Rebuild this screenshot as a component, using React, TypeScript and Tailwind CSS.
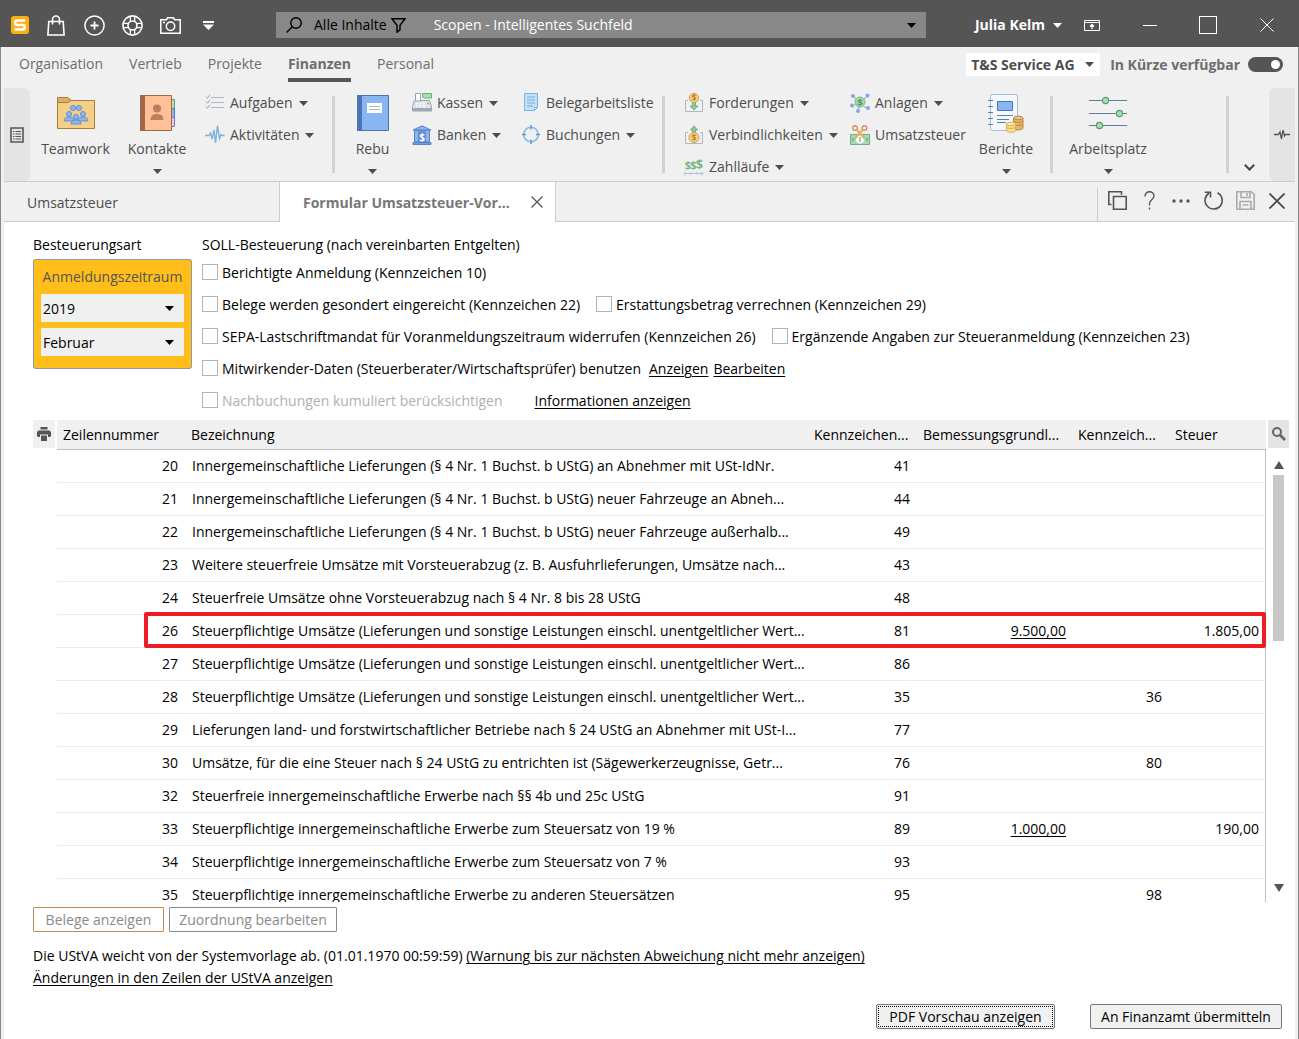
import React, { FC, ReactNode } from 'react';

interface ChildrenProps {
    children: ReactNode;
}

const Arrow: FC<{ className?: string }> = ({ className = 'text-[#4d4d4d]' }) => (
    <svg className={['h-[5px] w-[9px] shrink-0 pointer-events-none', className].join(' ')} viewBox="0 0 9 5">
        <path d="M0 0h9L4.5 5z" fill="currentColor" />
    </svg>
);

/* ---------- title bar icons ---------- */

const LogoIcon = () => (
    <svg className="h-[18px] w-[18px]" viewBox="0 0 18 18">
        <rect width="18" height="18" rx="3" fill="#fbb116" />
        <path
            d="M14 4.5H6.2C4.8 4.5 4 5.2 4 6.6S4.8 9 6.2 9h5.3c1.500 0 2.300.8 2.300 2.200s-.8 2.300-2.300 2.300H3.700"
            fill="none"
            stroke="#fff"
            strokeWidth="2.500"
        />
    </svg>
);

const BagIcon = () => (
    <svg className="h-[21px] w-[18px]" viewBox="0 0 18 21" fill="none" stroke="#fff" strokeWidth="1.600">
        <path d="M1.800 6.500h14.400l.9 13.500H.9z" />
        <path d="M5.500 9.500V4.500a3.500 3.500 0 0 1 7 0v5" />
    </svg>
);

const PlusIcon = () => (
    <svg className="h-[21px] w-[21px]" viewBox="0 0 21 21" fill="none" stroke="#fff" strokeWidth="1.500">
        <circle cx="10.500" cy="10.500" r="9.600" />
        <path d="M10.500 6.500v8M6.500 10.500h8" strokeWidth="1.800" />
    </svg>
);

const HelpRingIcon = () => (
    <svg className="h-[21px] w-[21px]" viewBox="0 0 21 21" fill="none" stroke="#fff" strokeWidth="1.600">
        <circle cx="10.500" cy="10.500" r="9.600" />
        <circle cx="10.500" cy="10.500" r="4.500" />
        <path
            d="M8.300 1.500v4.800M12.700 1.500v4.800M8.300 19.500v-4.800M12.700 19.500v-4.800M1.500 8.300h4.800M1.500 12.700h4.800M19.500 8.300h-4.800M19.500 12.700h-4.800"
            strokeWidth="1.300"
        />
    </svg>
);

const CameraIcon = () => (
    <svg className="h-[17px] w-[21px]" viewBox="0 0 21 17" fill="none" stroke="#fff" strokeWidth="1.500">
        <path d="M.8 2.800h5.700L7.500.8h6l1 2h5.700v13.400H.8z" />
        <circle cx="10.500" cy="9.300" r="4.200" />
        <path d="M3 5.500h2" />
    </svg>
);

const QuickMenuIcon = () => (
    <svg className="h-[9px] w-[11px]" viewBox="0 0 11 9" fill="#fff">
        <path d="M0 0h11v2H0zM0 3.500h11L5.500 9z" />
    </svg>
);

const SearchIcon = () => (
    <svg className="h-4 w-4" viewBox="0 0 16 16" fill="none" stroke="#000" strokeWidth="1.400">
        <circle cx="10" cy="6" r="5.200" />
        <path d="M6.300 9.700.6 15.400" />
    </svg>
);

const FilterIcon = () => (
    <svg className="h-[15px] w-[15px]" viewBox="0 0 15 15" fill="none" stroke="#000" strokeWidth="1.400">
        <path d="M1 .8h13L9 7.200v4.600l-3 2.400v-7z" />
    </svg>
);

const RibbonToggleIcon = () => (
    <svg className="h-[11px] w-4" viewBox="0 0 16 11" fill="none" stroke="#fff">
        <path d="M.5.5h15v10H.5zM.5 2.500h15" />
        <path d="M8 9V5M6 6.500l2-2 2 2" strokeWidth="1.300" />
    </svg>
);

/* ---------- ribbon icons ---------- */

const person = (x: number, y: number) => (
    <g key={`${x}-${y}`}>
        <path d={`M${x - 5} ${y + 7}c0-3 2-4 5-4s5 1 5 4z`} />
        <circle cx={x} cy={y} r="2.600" />
    </g>
);

const TeamworkIcon = () => (
    <svg className="h-[32px] w-[38px]" viewBox="0 0 38 32">
        <path d="M.5 31.500V.5h10l3.500 3h23.500v28z" fill="#f5cf85" stroke="#a5803f" />
        <path d="M.5.5h10L14 3.500l-3 2H.5z" fill="#dcae62" stroke="#a5803f" />
        <g fill="#8ab4f2" stroke="#5b86c9" strokeWidth=".8">
            <circle cx="16" cy="11" r="2.600" />
            <circle cx="22" cy="11" r="2.600" />
            {person(12, 17)}
            {person(26, 17)}
            {person(19, 20)}
        </g>
    </svg>
);

const KontakteIcon = () => (
    <svg className="h-[36px] w-[35px]" viewBox="0 0 35 36">
        <path d="M31 4.500h3.500v9H31z" fill="#b4dfbb" stroke="#5f9f70" />
        <path d="M31 13.500h3.500v9H31z" fill="#8ab4f2" stroke="#4a78bd" />
        <path d="M31 22.500h3.500v9H31z" fill="#dccbec" stroke="#8a6fae" />
        <path d="M.5.5h31v35H.5z" fill="#ffbf97" stroke="#a0674a" />
        <path d="M.5.5h4v35h-4z" fill="#a0674a" stroke="#a0674a" />
        <circle cx="17" cy="13.500" r="4" fill="#b97f60" />
        <path d="M10.500 25c0-4 2.500-6 6.500-6s6.500 2 6.500 6z" fill="#b97f60" />
    </svg>
);

const RebuIcon = () => (
    <svg className="h-[36px] w-[32px]" viewBox="0 0 32 36">
        <path d="M.5.5h31v35H.5z" fill="#89b5f1" stroke="#4a76b8" />
        <path d="M.5.5h4v35h-4z" fill="#4a76b8" stroke="#4a76b8" />
        <path d="M10 8h15v10H10z" fill="#fff" />
        <path d="M12 11.500h11M12 14.500h11" stroke="#a9b6c6" />
    </svg>
);

const BerichteIcon = () => (
    <svg className="h-[39px] w-[36px]" viewBox="0 0 36 39">
        <rect x="2.500" y=".5" width="27" height="36" rx="2" fill="#f2f8fe" stroke="#a3bcd6" />
        <path d="M0 6.500h5M0 12.500h5M0 18.500h5M0 24.500h5M0 30.500h5" stroke="#5f7d9c" />
        <path d="M9.500 7.500h15v9h-15z" fill="#8ab4f2" stroke="#4a76b8" />
        <path d="M9 21.500h16M9 25.500h12M9 28.500h9" stroke="#5f7d9c" />
        <g stroke="#b78941">
            <path d="M25.500 24v10c0 2.500 9.500 2.500 9.500 0V24z" fill="#e5b368" />
            <ellipse cx="30.300" cy="24" rx="4.700" ry="1.800" fill="#eec281" />
            <path d="M25.500 27c0 2 9.500 2 9.500 0M25.500 30c0 2 9.500 2 9.500 0" fill="none" />
        </g>
        <g stroke="#d6b45a">
            <path d="M18.500 30v6.500c0 2.500 9 2.500 9 0V30z" fill="#f7dd8c" />
            <ellipse cx="23" cy="30" rx="4.500" ry="1.800" fill="#fbe8a6" />
            <path d="M18.500 33c0 2 9 2 9 0" fill="none" />
        </g>
    </svg>
);

const ArbeitsplatzIcon = () => (
    <svg className="h-[34px] w-[38px]" viewBox="0 0 38 34">
        <path d="M0 4.500h38M0 17.500h38M0 29.500h38" stroke="#5f7d9c" />
        <g fill="#a8dcb2" stroke="#5a9f72" strokeWidth="1.200">
            <circle cx="16.500" cy="4.500" r="3.100" />
            <circle cx="30.500" cy="17.500" r="3.100" />
            <circle cx="10.500" cy="29.500" r="3.100" />
        </g>
    </svg>
);

const SmallIcon: FC<ChildrenProps> = ({ children }) => (
    <svg className="h-5 w-5 shrink-0" viewBox="0 0 20 20" fill="none">
        {children}
    </svg>
);

const AufgabenIcon = () => (
    <SmallIcon>
        <path d="M6 4.500h13M6 9.500h13M6 14.500h13" stroke="#a9b9c9" />
        <path d="m.8 3.500 1.700 1.700L5 1.800M.8 8.500l1.700 1.700L5 6.800M.8 13.500l1.700 1.700L5 11.800" stroke="#7dbb8d" />
    </SmallIcon>
);

const AktivitaetenIcon = () => (
    <SmallIcon>
        <path d="M0 10.500h4l1.500-2.500L7 14l2-9 1.500 13L12.500.5l2 13 1.500-4 1 1h2.500" stroke="#7fb0df" strokeWidth="1.400" />
    </SmallIcon>
);

const KassenIcon = () => (
    <SmallIcon>
        <path d="M2.500 7.500h15l2 6v4.500h-19v-4.500z" fill="#dfe3e8" stroke="#9aa5b1" />
        <path d="M1 15h18v3H1z" fill="#9dabb9" />
        <path d="M10.500.5h9V5h-7l-2-1z" fill="#a9ddb2" stroke="#6dad7e" />
        <path d="M3.500.5h5v7.500h-5z" fill="#fff" stroke="#9aa5b1" />
        <path d="M4 10.500h2M7.500 10.500h2M11 10.500h2M4 13h2M7.500 13h2M11 13h2" stroke="#fff" strokeWidth="1.500" />
        <path d="M15 10.500h2" stroke="#ea8a80" strokeWidth="1.500" />
    </SmallIcon>
);

const BankenIcon = () => (
    <SmallIcon>
        <path d="M1 5 10 .8 19 5z" fill="#8ab4f2" stroke="#5b86c9" />
        <path d="M2.500 5.500h15V17h-15z" fill="#8ab4f2" stroke="#5b86c9" />
        <path d="M1 17.500h18v2H1z" fill="#6d99da" stroke="#5b86c9" />
        <path d="M6 6.500h8V17H6z" fill="#5f8cd0" />
        <text x="10" y="15.500" fontSize="10" fontWeight="700" textAnchor="middle" fill="#fff">$</text>
    </SmallIcon>
);

const BelegIcon = () => (
    <SmallIcon>
        <path d="M3.500.5h13v14l-3 3h-10z" fill="#bfe1fb" stroke="#7fb3dd" />
        <path d="M16.500 14.500 13.500 17.500v-3z" fill="#fff" stroke="#7fb3dd" />
        <path d="M6 4h8M6 7h8M6 10h8M6 13h6" stroke="#7fa9d6" />
    </SmallIcon>
);

const BuchungenIcon = () => (
    <SmallIcon>
        <circle cx="10" cy="9.500" r="7.300" stroke="#8bbbe3" strokeWidth="1.600" />
        <path d="M10 0v4.500M10 14.500V19M1 9.500h4M15 9.500h4" stroke="#6c93bd" strokeWidth="1.400" />
    </SmallIcon>
);

const ForderungenIcon = () => (
    <SmallIcon>
        <path d="M4 7.500H1.500v11h17v-11H16" stroke="#a9b9c9" />
        <path d="M8.500 9h3v4h2.500l-4 4-4-4h2.500z" fill="#8fcb9d" stroke="#63a577" strokeWidth=".8" />
        <circle cx="10" cy="5" r="4.600" fill="#f7cf85" stroke="#d39f4a" />
        <text x="10" y="8" fontSize="8" fontWeight="700" textAnchor="middle" fill="#b57f2d">$</text>
    </SmallIcon>
);

const VerbindlichkeitenIcon = () => (
    <SmallIcon>
        <path d="M4 7.500H1.500v11h17v-11H16" stroke="#a9b9c9" />
        <path d="M8.500 9V5H6.500L10 .8 13.500 5h-2v4z" fill="#8fcb9d" stroke="#63a577" strokeWidth=".8" />
        <circle cx="10" cy="12.500" r="5" fill="#f7cf85" stroke="#d39f4a" />
        <text x="10" y="15.500" fontSize="8" fontWeight="700" textAnchor="middle" fill="#b57f2d">$</text>
    </SmallIcon>
);

const ZahllaeufeIcon = () => (
    <SmallIcon>
        <g fontSize="11" fontWeight="700" textAnchor="middle" fill="#79b68a">
            <text x="4" y="12">$</text>
            <text x="9.500" y="12">$</text>
            <text x="15.500" y="12" fontSize="13">$</text>
        </g>
        <path d="M0 16.500h19M1 14.500v4M7 15v3M13 15v3M17 14.500l2 2-2 2" stroke="#b3c3dc" />
    </SmallIcon>
);

const AnlagenIcon = () => (
    <SmallIcon>
        <path d="m3 3 14 13M18 3 3 13M10 10 8 18" stroke="#8d9fb3" />
        <circle cx="10" cy="9" r="5" fill="#9fd7ab" stroke="#7dbb8d" />
        <text x="10" y="12.500" fontSize="9" fontWeight="700" textAnchor="middle" fill="#4f9166">$</text>
        <g fill="#7ba9ec">
            <circle cx="3" cy="3" r="2" />
            <circle cx="17.500" cy="2.500" r="2" />
            <circle cx="2" cy="12.500" r="2" />
            <circle cx="18" cy="15" r="2" />
            <circle cx="8" cy="18" r="2" />
        </g>
    </SmallIcon>
);

const UmsatzsteuerIcon = () => (
    <SmallIcon>
        <path d="M.5 9.500h19v10H.5z" fill="#a5dab0" stroke="#6fb080" />
        <circle cx="10" cy="14.500" r="4" fill="#fff" />
        <path d="M3 13v3M17 13v3M10 12v5" stroke="#4f9166" />
        <circle cx="5" cy="3" r="2.300" stroke="#dd8b6a" strokeWidth="1.500" />
        <circle cx="14.500" cy="3" r="2.300" stroke="#dd8b6a" strokeWidth="1.500" />
        <path d="m6.500 4.500 8 9M13 4.500l-8 9" stroke="#e2ae62" strokeWidth="2" />
    </SmallIcon>
);

/* ---------- ribbon building blocks ---------- */

interface RibbonItem {
    icon: ReactNode;
    label: string;
    menu?: boolean;
}

const LargeButton: FC<RibbonItem & { className: string }> = ({ icon, label, menu, className }) => (
    <button className={['flex shrink-0 flex-col items-center pt-[6px] text-[#4d4d4d]', className].join(' ')}>
        <span className="flex h-10 items-center justify-center">{icon}</span>
        <span className="h-8 leading-8">{label}</span>
        {menu && (
            <span className="flex h-3 items-center">
                <Arrow />
            </span>
        )}
    </button>
);

const SmallColumn: FC<{ items: RibbonItem[]; className: string }> = ({ items, className }) => (
    <div className={['shrink-0', className].join(' ')}>
        {items.map((i) => (
            <button key={i.label} className="flex h-8 items-center text-[#4d4d4d]">
                {i.icon}
                <span className="ml-[5px] mr-[6px] whitespace-nowrap">{i.label}</span>
                {i.menu && <Arrow />}
            </button>
        ))}
    </div>
);

const Divider = () => <div className="mt-[9px] h-[77px] w-[3px] shrink-0 bg-[#d2d2d2]" />;

const Check: FC<{ label: string; disabled?: boolean }> = ({ label, disabled }) => (
    <label className={['flex items-center gap-1', disabled ? 'text-[#b0b0b0]' : ''].join(' ')}>
        <input
            type="checkbox"
            disabled={disabled}
            className="mb-[2px] h-4 w-4 shrink-0 appearance-none border border-[#b4b4b4] bg-white checked:bg-[#555]"
        />
        {label}
    </label>
);

const PeriodSelect: FC<{ label: string; options: string[]; value: string }> = ({ label, options, value }) => (
    <div className="relative">
        <select
            aria-label={label}
            defaultValue={value}
            className="block h-7 w-full appearance-none bg-[#f0f0f0] pl-[2px] pt-[2px] text-black"
        >
            {options.map((o) => (
                <option key={o}>{o}</option>
            ))}
        </select>
        <Arrow className="absolute right-[10px] top-[12px] text-black" />
    </div>
);

const mainTabs = ['Organisation', 'Vertrieb', 'Projekte', 'Finanzen', 'Personal'];

interface Row {
    line: number;
    text: string;
    kz: string;
    base?: string;
    kzTax?: string;
    tax?: string;
    marked?: boolean;
}

const rows: Row[] = [
    { line: 20, text: 'Innergemeinschaftliche Lieferungen (§ 4 Nr. 1 Buchst. b UStG) an Abnehmer mit USt-IdNr.', kz: '41' },
    { line: 21, text: 'Innergemeinschaftliche Lieferungen (§ 4 Nr. 1 Buchst. b UStG) neuer Fahrzeuge an Abneh...', kz: '44' },
    { line: 22, text: 'Innergemeinschaftliche Lieferungen (§ 4 Nr. 1 Buchst. b UStG) neuer Fahrzeuge außerhalb...', kz: '49' },
    { line: 23, text: 'Weitere steuerfreie Umsätze mit Vorsteuerabzug (z. B. Ausfuhrlieferungen, Umsätze nach...', kz: '43' },
    { line: 24, text: 'Steuerfreie Umsätze ohne Vorsteuerabzug nach § 4 Nr. 8 bis 28 UStG', kz: '48' },
    {
        line: 26,
        text: 'Steuerpflichtige Umsätze (Lieferungen und sonstige Leistungen einschl. unentgeltlicher Wert...',
        kz: '81',
        base: '9.500,00',
        tax: '1.805,00',
        marked: true,
    },
    { line: 27, text: 'Steuerpflichtige Umsätze (Lieferungen und sonstige Leistungen einschl. unentgeltlicher Wert...', kz: '86' },
    {
        line: 28,
        text: 'Steuerpflichtige Umsätze (Lieferungen und sonstige Leistungen einschl. unentgeltlicher Wert...',
        kz: '35',
        kzTax: '36',
    },
    { line: 29, text: 'Lieferungen land- und forstwirtschaftlicher Betriebe nach § 24 UStG an Abnehmer mit USt-I...', kz: '77' },
    {
        line: 30,
        text: 'Umsätze, für die eine Steuer nach § 24 UStG zu entrichten ist (Sägewerkerzeugnisse, Getr...',
        kz: '76',
        kzTax: '80',
    },
    { line: 32, text: 'Steuerfreie innergemeinschaftliche Erwerbe nach §§ 4b und 25c UStG', kz: '91' },
    {
        line: 33,
        text: 'Steuerpflichtige innergemeinschaftliche Erwerbe zum Steuersatz von 19 %',
        kz: '89',
        base: '1.000,00',
        tax: '190,00',
    },
    { line: 34, text: 'Steuerpflichtige innergemeinschaftliche Erwerbe zum Steuersatz von 7 %', kz: '93' },
    { line: 35, text: 'Steuerpflichtige innergemeinschaftliche Erwerbe zu anderen Steuersätzen', kz: '95', kzTax: '98' },
];

const TitleBar = () => (
    <header className="flex h-[47px] shrink-0 items-center bg-[#555] pt-[3px] text-white">
        <div className="flex w-[276px] shrink-0 items-center pl-[11px]">
            <LogoIcon />
            <div className="ml-2 flex items-center">
                <button aria-label="Shop" className="flex w-[38px] justify-center"><BagIcon /></button>
                <button aria-label="Neu" className="flex w-[38px] justify-center"><PlusIcon /></button>
                <button aria-label="Hilfe" className="flex w-[38px] justify-center"><HelpRingIcon /></button>
                <button aria-label="Bildschirmfoto" className="flex w-[38px] justify-center"><CameraIcon /></button>
                <button aria-label="Schnellzugriff" className="flex w-[38px] justify-center"><QuickMenuIcon /></button>
            </div>
        </div>
        <div className="flex h-[26px] min-w-0 flex-1 items-center bg-[#888] px-[10px]">
            <SearchIcon />
            <button className="ml-3 flex shrink-0 items-center gap-1 text-black">
                Alle Inhalte
                <FilterIcon />
            </button>
            <input
                aria-label="Suchfeld"
                placeholder="Scopen - Intelligentes Suchfeld"
                className="ml-7 min-w-0 flex-1 bg-transparent placeholder-white outline-none"
            />
            <Arrow className="text-black" />
        </div>
        <div className="flex w-[373px] shrink-0 items-center justify-end pr-[3px]">
            <button className="flex items-center gap-2 font-bold">
                Julia Kelm
                <Arrow className="text-white" />
            </button>
            <button aria-label="Menüband" className="flex w-[60px] justify-center"><RibbonToggleIcon /></button>
            <button aria-label="Minimieren" className="flex w-[56px] justify-center">
                <span className="h-px w-[14px] bg-white" />
            </button>
            <button aria-label="Maximieren" className="flex w-[60px] justify-center">
                <span className="h-[18px] w-[18px] border border-white" />
            </button>
            <button aria-label="Fenster schließen" className="flex w-[58px] justify-center">
                <svg className="h-[14px] w-[14px]" viewBox="0 0 14 14" stroke="#fff">
                    <path d="m.5.5 13 13M13.500.5l-13 13" />
                </svg>
            </button>
        </div>
    </header>
);

const MainNav = () => (
    <div className="flex h-10 shrink-0 items-start">
        <nav className="flex gap-[26px] pl-[15px] text-[#6d6d6d]">
            {mainTabs.map((t) => (
                <a
                    key={t}
                    href="#"
                    className={[
                        'h-[35px] leading-[34px]',
                        t === 'Finanzen' ? 'border-b-4 border-[#555] font-bold' : '',
                    ].join(' ')}
                >
                    {t}
                </a>
            ))}
        </nav>
        <div className="ml-auto flex items-center gap-[10px] pr-3 pt-[6px] font-bold text-[#4d4d4d]">
            <div className="relative w-[134px]">
                <select aria-label="Firma" className="block h-[23px] w-full appearance-none bg-white pl-[5px]">
                    <option>T&amp;S Service AG</option>
                </select>
                <Arrow className="absolute right-[6px] top-[9px] text-[#4d4d4d]" />
            </div>
            <label className="flex items-center gap-2 text-[#6d6d6d]">
                In Kürze verfügbar
                <span className="relative h-[15px] w-[35px]">
                    <input
                        type="checkbox"
                        role="switch"
                        defaultChecked
                        className="block h-full w-full appearance-none rounded-full bg-[#555]"
                    />
                    <span className="pointer-events-none absolute right-[3px] top-[3px] h-[9px] w-[9px] rounded-full bg-white" />
                </span>
            </label>
        </div>
    </div>
);

const Ribbon = () => (
    <div className="flex h-[95px] shrink-0 overflow-hidden border-b border-[#ccc]">
        <button aria-label="Liste" className="mt-px flex w-[26px] shrink-0 items-center justify-center rounded-r-md bg-[#e4e4e4]">
            <svg className="h-4 w-[14px]" viewBox="0 0 14 16" fill="none" stroke="#555">
                <path d="M1 1h12v14H1z" strokeWidth="1.600" />
                <path d="M5.500 4.500H11M5.500 7H11M5.500 9.500H11M5.500 12H11M3 4.500h1.500M3 7h1.500M3 9.500h1.500M3 12h1.500" />
            </svg>
        </button>
        <LargeButton className="w-[91px]" icon={<TeamworkIcon />} label="Teamwork" />
        <LargeButton className="w-[72px]" icon={<KontakteIcon />} label="Kontakte" menu />
        <SmallColumn
            className="w-[139px] pl-3"
            items={[
                { icon: <AufgabenIcon />, label: 'Aufgaben', menu: true },
                { icon: <AktivitaetenIcon />, label: 'Aktivitäten', menu: true },
            ]}
        />
        <Divider />
        <LargeButton className="w-[75px]" icon={<RebuIcon />} label="Rebu" menu />
        <SmallColumn
            className="w-[111px] pl-[2px]"
            items={[
                { icon: <KassenIcon />, label: 'Kassen', menu: true },
                { icon: <BankenIcon />, label: 'Banken', menu: true },
            ]}
        />
        <SmallColumn
            className="w-[141px]"
            items={[
                { icon: <BelegIcon />, label: 'Belegarbeitsliste' },
                { icon: <BuchungenIcon />, label: 'Buchungen', menu: true },
            ]}
        />
        <Divider />
        <SmallColumn
            className="w-[185px] pl-[19px]"
            items={[
                { icon: <ForderungenIcon />, label: 'Forderungen', menu: true },
                { icon: <VerbindlichkeitenIcon />, label: 'Verbindlichkeiten', menu: true },
                { icon: <ZahllaeufeIcon />, label: 'Zahlläufe', menu: true },
            ]}
        />
        <SmallColumn
            className="w-[123px]"
            items={[
                { icon: <AnlagenIcon />, label: 'Anlagen', menu: true },
                { icon: <UmsatzsteuerIcon />, label: 'Umsatzsteuer' },
            ]}
        />
        <LargeButton className="mr-[11px] w-[66px]" icon={<BerichteIcon />} label="Berichte" menu />
        <Divider />
        <LargeButton className="w-[110px]" icon={<ArbeitsplatzIcon />} label="Arbeitsplatz" menu />
        <div className="ml-auto flex">
            <Divider />
            <button aria-label="Mehr" className="flex w-10 items-end justify-center pb-[10px]">
                <svg className="h-[7px] w-[11px]" viewBox="0 0 11 7" fill="none" stroke="#444" strokeWidth="2">
                    <path d="m.8.8 4.700 4.700L10.200.8" />
                </svg>
            </button>
            <button aria-label="Aktivität" className="mt-px flex w-[26px] items-center justify-center rounded-l-md bg-[#e4e4e4]">
                <svg className="h-[11px] w-4" viewBox="0 0 16 11" fill="none" stroke="#555" strokeWidth="1.300">
                    <path d="M0 5.500h4.500L6 3l1.500 7L9 1l1.500 6 1-1.500H16" />
                </svg>
            </button>
        </div>
    </div>
);

const DocumentTabs = () => (
    <div className="flex h-10 shrink-0 text-[#4d4d4d]">
        <button className="w-[275px] border-b border-[#ccc] pl-[23px] pb-[2px] text-left pt-1">Umsatzsteuer</button>
        <div className="flex w-[277px] items-center border-x border-[#ccc] bg-white pl-[23px] pr-3">
            <button className="pt-[2px] font-bold text-[#777]">Formular Umsatzsteuer-Vor...</button>
            <button aria-label="Tab schließen" className="ml-auto">
                <svg className="h-3 w-3" viewBox="0 0 12 12" stroke="#555" strokeWidth="1.300">
                    <path d="m.5.5 11 11M11.500.5l-11 11" />
                </svg>
            </button>
        </div>
        <div className="flex flex-1 justify-end border-b border-[#ccc] pt-[6px]">
            <div className="flex items-center border-l border-[#ccc] pb-2 pl-[3px] pr-[2px]">
                <button aria-label="Duplizieren" className="flex w-8 justify-center">
                    <svg className="h-[19px] w-[19px]" viewBox="0 0 19 19" fill="none" stroke="#555" strokeWidth="1.600">
                        <path d="M5.500 5.500h12.700v12.700H5.500z" />
                        <path d="M3.500 13.500H.8V.8h12.700v3" />
                    </svg>
                </button>
                <button aria-label="Hilfe zum Formular" className="flex w-8 justify-center">
                    <svg className="h-[19px] w-[11px]" viewBox="0 0 11 19" fill="none" stroke="#555" strokeWidth="1.400">
                        <path d="M1 5.500C1 2.500 2.800.8 5.500.8S10 2.500 10 5c0 3.500-4.500 4-4.500 7.500v2M5.500 16.500v2" />
                    </svg>
                </button>
                <button aria-label="Weitere Aktionen" className="flex w-8 justify-center">
                    <svg className="h-[4px] w-[18px]" viewBox="0 0 18 4" fill="#555">
                        <circle cx="2" cy="2" r="1.700" />
                        <circle cx="9" cy="2" r="1.700" />
                        <circle cx="16" cy="2" r="1.700" />
                    </svg>
                </button>
                <button aria-label="Aktualisieren" className="flex w-8 justify-center">
                    <svg className="h-[19px] w-[19px]" viewBox="0 0 19 19" fill="none" stroke="#555" strokeWidth="1.600">
                        <path d="M13.500 1.800A8.600 8.600 0 1 1 5 2.200" />
                        <path d="M.8 1.200h5.700v5.300" />
                    </svg>
                </button>
                <button aria-label="Speichern" disabled className="flex w-8 justify-center">
                    <svg className="h-[19px] w-[19px]" viewBox="0 0 19 19" fill="none" stroke="#aaa" strokeWidth="1.600">
                        <path d="M.8.8h14.700l2.700 2.700v14.700H.8z" />
                        <path d="M5 1v5.500h9V1M4 18v-7.500h11V18M6.500 14h6M11 2v3" />
                    </svg>
                </button>
                <button aria-label="Formular schließen" className="flex w-8 justify-center">
                    <svg className="h-4 w-4" viewBox="0 0 16 16" stroke="#444" strokeWidth="1.700">
                        <path d="m.5.5 15 15M15.500.5l-15 15" />
                    </svg>
                </button>
            </div>
        </div>
    </div>
);

const FormHead = () => (
    <div className="flex gap-[10px] pl-[29px] pt-[11px]">
        <div className="w-[159px] shrink-0">
            <div className="h-[26px] leading-6">Besteuerungsart</div>
            <fieldset className="h-[110px] rounded-[3px] border border-[#8c9bb5] bg-[#ffbe19] px-[7px]">
                <div className="h-[34px] text-center leading-[34px] text-[#555]">Anmeldungszeitraum</div>
                <div className="flex flex-col gap-[6px]">
                    <PeriodSelect label="Jahr" options={['2018', '2019', '2020']} value="2019" />
                    <PeriodSelect label="Monat" options={['Januar', 'Februar', 'März']} value="Februar" />
                </div>
            </fieldset>
        </div>
        <div className="whitespace-nowrap">
            <div className="h-6 leading-6">SOLL-Besteuerung (nach vereinbarten Entgelten)</div>
            <div className="flex h-8 items-center">
                <Check label="Berichtigte Anmeldung (Kennzeichen 10)" />
            </div>
            <div className="flex h-8 items-center gap-4">
                <Check label="Belege werden gesondert eingereicht (Kennzeichen 22)" />
                <Check label="Erstattungsbetrag verrechnen (Kennzeichen 29)" />
            </div>
            <div className="flex h-8 items-center gap-4">
                <Check label="SEPA-Lastschriftmandat für Voranmeldungszeitraum widerrufen (Kennzeichen 26)" />
                <Check label="Ergänzende Angaben zur Steueranmeldung (Kennzeichen 23)" />
            </div>
            <div className="flex h-8 items-center">
                <Check label="Mitwirkender-Daten (Steuerberater/Wirtschaftsprüfer) benutzen" />
                <a href="#" className="ml-2 underline underline-offset-2">Anzeigen</a>
                <a href="#" className="ml-[5px] underline underline-offset-2">Bearbeiten</a>
            </div>
            <div className="flex h-8 items-center">
                <Check label="Nachbuchungen kumuliert berücksichtigen" disabled />
                <a href="#" className="ml-8 underline underline-offset-2">Informationen anzeigen</a>
            </div>
        </div>
    </div>
);

const TaxTable = () => (
    <div className="flex min-h-0 flex-1 gap-[2px] pl-[29px] pr-[6px] pt-[3px]">
        <button aria-label="Drucken" className="flex h-7 w-[22px] shrink-0 items-center justify-center bg-[#f0f0f0]">
            <svg className="h-[14px] w-[14px]" viewBox="0 0 14 14" fill="#555">
                <path d="M3.500 0h7v2.500h-7z" />
                <path d="M1.500 3.500h11L14 5v4l-1 1h-2V7.500H3V10H1L0 9V5z" />
                <path d="M4 8.500h6V14H4z" />
            </svg>
        </button>
        <div className="min-w-0 flex-1 overflow-hidden">
            <table className="w-full table-fixed border-separate border-spacing-0 whitespace-nowrap leading-[14px]">
                <thead>
                    <tr className="h-[30px] bg-[#f0f0f0] text-left">
                        <th className="w-[128px] border-b border-[#c0c0c0] pl-[6px] font-normal">Zeilennummer</th>
                        <th className="border-b border-[#c0c0c0] pl-[6px] font-normal">Bezeichnung</th>
                        <th className="w-[109px] border-b border-[#c0c0c0] pl-[6px] font-normal">Kennzeichen...</th>
                        <th className="w-[155px] border-b border-[#c0c0c0] pl-[6px] font-normal">Bemessungsgrundl...</th>
                        <th className="w-[97px] border-b border-[#c0c0c0] pl-[6px] font-normal">Kennzeich...</th>
                        <th className="w-[97px] border-b border-[#c0c0c0] pl-[6px] font-normal">Steuer</th>
                    </tr>
                </thead>
                <tbody>
                    {rows.map((r) => (
                        <tr key={r.line} className="relative h-[33px] text-right">
                            <td className="border-b border-[#ececec] pr-[7px]">{r.line}</td>
                            <td className="border-b border-[#ececec] pl-[7px] text-left">{r.text}</td>
                            <td className="border-b border-[#ececec] pr-[7px]">{r.kz}</td>
                            <td className="border-b border-[#ececec] pr-[6px]">
                                {r.base && <a href="#" className="underline underline-offset-2">{r.base}</a>}
                            </td>
                            <td className="border-b border-[#ececec] pr-[7px]">{r.kzTax}</td>
                            <td className="border-b border-r border-b-[#ececec] border-r-[#c0c0c0] pr-[6px]">
                                {r.tax}
                                {r.marked && (
                                    <span className="pointer-events-none absolute -top-[3px] bottom-0 left-[87px] right-0 rounded-[2px] border-4 border-[#ee1c23]" />
                                )}
                            </td>
                        </tr>
                    ))}
                </tbody>
            </table>
        </div>
        <div className="flex w-[21px] shrink-0 flex-col items-center">
            <button aria-label="Tabelle durchsuchen" className="flex h-7 w-full items-center justify-center bg-[#e4e4e4]">
                <svg className="h-[14px] w-[14px]" viewBox="0 0 14 14" fill="none" stroke="#666">
                    <circle cx="5" cy="5" r="4" strokeWidth="2" />
                    <path d="m8 8 5 5" strokeWidth="2.600" />
                </svg>
            </button>
            <svg className="mt-[13px] h-2 w-[10px]" viewBox="0 0 10 8">
                <path d="M5 0l5 8H0z" fill="#555" />
            </svg>
            <div className="mt-[6px] h-[166px] w-[11px] bg-[#c8c8c8]" />
            <svg className="mb-[10px] mt-auto h-2 w-[10px]" viewBox="0 0 10 8">
                <path d="M0 0h10L5 8z" fill="#555" />
            </svg>
        </div>
    </div>
);

const FormFooter = () => (
    <footer className="flex shrink-0 flex-col pb-[10px] pl-[29px] pr-[13px] pt-[5px]">
        <div className="flex gap-[5px]">
            <button disabled className="h-[25px] w-[131px] rounded-[1px] border border-[#c08a50] text-[#8a8a8a]">
                Belege anzeigen
            </button>
            <button disabled className="h-[25px] w-[168px] rounded-[1px] border border-[#8a8a8a] text-[#8a8a8a]">
                Zuordnung bearbeiten
            </button>
        </div>
        <div className="mt-[13px] leading-[22px]">
            <p>
                Die UStVA weicht von der Systemvorlage ab. (01.01.1970 00:59:59){' '}
                <a href="#" className="underline underline-offset-2">(Warnung bis zur nächsten Abweichung nicht mehr anzeigen)</a>
            </p>
            <p>
                <a href="#" className="underline underline-offset-2">Änderungen in den Zeilen der UStVA anzeigen</a>
            </p>
        </div>
        <div className="mt-[15px] flex justify-end gap-[35px]">
            <button className="h-[25px] w-[179px] rounded-[2px] border border-[#777] bg-[#f0f0f0] p-px">
                <span className="flex h-full items-center justify-center border border-dotted border-black">PDF Vorschau anzeigen</span>
            </button>
            <button className="h-[25px] w-[192px] rounded-[2px] border border-[#777] bg-[#f0f0f0]">An Finanzamt übermitteln</button>
        </div>
    </footer>
);

const App = () => {
    return (
        <div className="flex h-screen flex-col bg-[#f0f0f0] font-['Open_Sans','Noto_Sans',sans-serif] text-[14px] leading-5 text-black">
            <TitleBar />
            <div className="flex min-h-0 flex-1 flex-col border-x border-[#888] pl-[3px] pr-[3px]">
                <MainNav />
                <Ribbon />
                <DocumentTabs />
                <main className="flex min-h-0 flex-1 flex-col bg-white">
                    <FormHead />
                    <TaxTable />
                    <FormFooter />
                </main>
            </div>
        </div>
    );
};

export default App;
